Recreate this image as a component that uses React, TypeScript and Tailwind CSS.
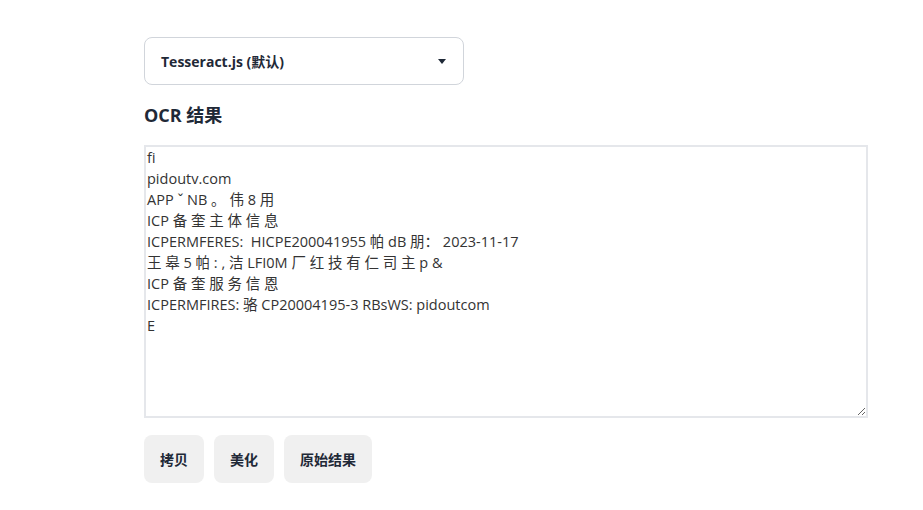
import { useState } from 'react';

const OCR_TEXT = `fi
pidoutv.com
APP ˇ NB 。 伟 8 用
ICP 备 奎 主 体 信 息
ICPERMFERES:  HICPE200041955 帕 dB 朋： 2023-11-17
王 皋 5 帕 : , 洁 LFI0M 厂 红 技 有 仁 司 主 p &
ICP 备 奎 服 务 信 恩
ICPERMFIRES: 骆 CP20004195-3 RBsWS: pidoutcom
E`;

const font = "font-['Open_Sans','Noto_Sans_CJK_SC',sans-serif]";

export default function App() {
  const [engine] = useState('Tesseract.js (默认)');
  const [text, setText] = useState(OCR_TEXT);

  return (
    <div className={`min-h-[510px] w-full bg-white text-[#1f2937] ${font}`}>
      <div className="pl-[144px] pr-[55px] pt-[37px]">
        {/* engine select */}
        <button className="flex h-[48px] w-[320px] items-center justify-between rounded-lg border border-[#d1d5db] bg-white pl-4 pr-[17px] text-[14px] font-bold text-[#1f2937]">
          <span>{engine}</span>
          <svg width="8" height="5" viewBox="0 0 8 5">
            <path d="M0 0h8L4 5z" fill="#1f2937" />
          </svg>
        </button>

        <h2 className="mt-[18px] text-[18px] font-bold leading-[24px] text-[#1f2937]">OCR 结果</h2>

        <textarea
          value={text}
          onChange={(e) => setText(e.target.value)}
          className="mt-[18px] block h-[273px] w-[724px] resize-y border-2 border-[#e5e7eb] px-[1px] py-0 text-[14.5px] leading-[21px] text-[#333333] outline-none"
        />

        <div className="mt-[17px] flex gap-[10px]">
          {['拷贝', '美化', '原始结果'].map((label) => (
            <button
              key={label}
              className="h-[48px] rounded-lg bg-[#f0f0f0] px-4 text-[14px] font-bold text-[#1f2937]"
            >
              {label}
            </button>
          ))}
        </div>
      </div>
    </div>
  );
}
